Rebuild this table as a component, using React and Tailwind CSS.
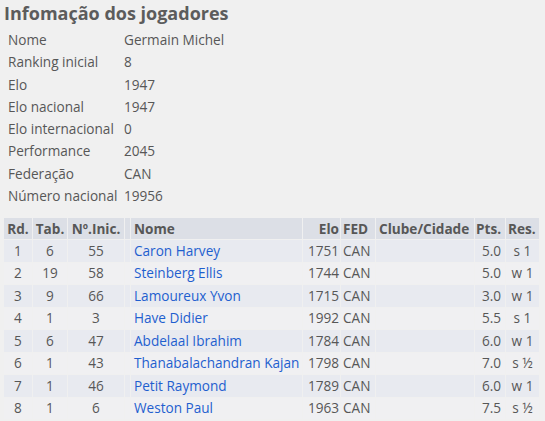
const info = [
  ["Nome", "Germain Michel"],
  ["Ranking inicial", "8"],
  ["Elo", "1947"],
  ["Elo nacional", "1947"],
  ["Elo internacional", "0"],
  ["Performance", "2045"],
  ["Federação", "CAN"],
  ["Número nacional", "19956"],
];

const rounds = [
  [1, 6, 55, "Caron Harvey", 1751, "CAN", "5.0", "s 1"],
  [2, 19, 58, "Steinberg Ellis", 1744, "CAN", "5.0", "w 1"],
  [3, 9, 66, "Lamoureux Yvon", 1715, "CAN", "3.0", "w 1"],
  [4, 1, 3, "Have Didier", 1992, "CAN", "5.5", "s 1"],
  [5, 6, 47, "Abdelaal Ibrahim", 1784, "CAN", "6.0", "w 1"],
  [6, 1, 43, "Thanabalachandran Kajan", 1798, "CAN", "7.0", "s ½"],
  [7, 1, 46, "Petit Raymond", 1789, "CAN", "6.0", "w 1"],
  [8, 1, 6, "Weston Paul", 1963, "CAN", "7.5", "s ½"],
];

export default function App() {
  return (
    <div className="w-[545px] h-[421px] bg-[#f0f0f0] text-[#575757] overflow-hidden" style={{ fontFamily: '"Open Sans", "Noto Sans", sans-serif' }}>
      <h1 className="text-[18px] font-bold leading-[24px] pl-[4px] pt-[1px] text-[#5c5c5c]">Infomação dos jogadores</h1>
      <div className="pl-[8px] pt-[4px] text-[13.6px]">
        {info.map(([k, v]) => (
          <div key={k} className="flex h-[22.3px] items-center">
            <span className="w-[116px]">{k}</span>
            <span>{v}</span>
          </div>
        ))}
      </div>
      <table className="mt-[10px] ml-[3px] w-[537px] table-fixed border-separate border-spacing-[1px] text-[13.6px]">
        <colgroup>
          <col className="w-[28px]" />
          <col className="w-[34px]" />
          <col className="w-[56px]" />
          <col className="w-[5px]" />
          <col className="w-[171px]" />
          <col className="w-[37px]" />
          <col className="w-[34px]" />
          <col className="w-[98px]" />
          <col className="w-[30px]" />
          <col className="w-[33px]" />
        </colgroup>
        <thead>
          <tr className="bg-[#dcdfe6] h-[21px] font-bold">
            <th className="text-center px-0">Rd.</th>
            <th className="text-center px-0">Tab.</th>
            <th className="text-center px-0 whitespace-nowrap">Nº.Inic.</th>
            <th></th>
            <th className="text-left pl-[3px]">Nome</th>
            <th className="text-right pr-[1px]">Elo</th>
            <th className="text-left pl-[2px]">FED</th>
            <th className="text-left pl-[3px] whitespace-nowrap">Clube/Cidade</th>
            <th className="text-left pl-[1px]">Pts.</th>
            <th className="text-left pl-[2px]">Res.</th>
          </tr>
        </thead>
        <tbody>
          {rounds.map((r, i) => (
            <tr key={r[0]} className={`h-[21.5px] ${i % 2 === 0 ? "bg-[#e8eaf0]" : "bg-[#f0f0f2]"}`}>
              <td className="text-center">{r[0]}</td>
              <td className="text-center">{r[1]}</td>
              <td className="text-center">{r[2]}</td>
              <td></td>
              <td className="pl-[3px] text-[#1f5fcf] whitespace-nowrap overflow-visible">{r[3]}</td>
              <td className="text-right pr-[1px]">{r[4]}</td>
              <td className="pl-[2px]">{r[5]}</td>
              <td></td>
              <td className="text-right pr-[4px]">{r[6]}</td>
              <td className="text-center">{r[7]}</td>
            </tr>
          ))}
        </tbody>
      </table>
    </div>
  );
}
